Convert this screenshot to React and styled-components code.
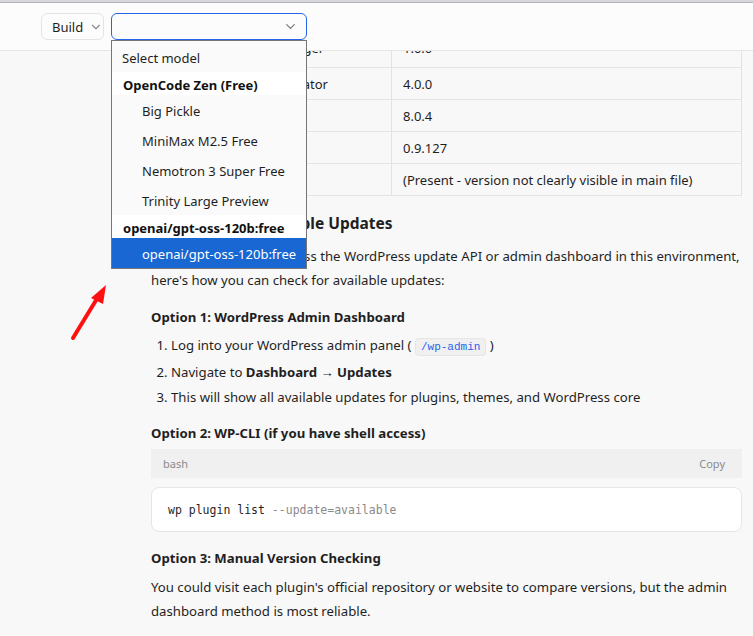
import React from "react";
import styled, { createGlobalStyle } from "styled-components";
import { ChevronDown } from "lucide-react";

const GlobalStyle = createGlobalStyle`
  html, body {
    margin: 0;
    padding: 0;
    height: 100%;
    overflow: hidden;
    background: #f8f8f8;
  }
  body {
    font-family: "Noto Sans", "Open Sans", sans-serif;
    color: #1f1f1f;
  }
`;

const models = [
  {
    group: "OpenCode Zen (Free)",
    items: ["Big Pickle", "MiniMax M2.5 Free", "Nemotron 3 Super Free", "Trinity Large Preview"],
  },
  {
    group: "openai/gpt-oss-120b:free",
    items: ["openai/gpt-oss-120b:free"],
  },
];

const selectedModel = "openai/gpt-oss-120b:free";

const versions = [
  ["WP Custom Field Manager", "1.0.0"],
  ["Schema Markup Generator", "4.0.0"],
  ["Contact Form Builder", "8.0.4"],
  ["Site Health Monitor", "0.9.127"],
  ["Analytics Helper", "(Present - version not clearly visible in main file)"],
];

function App() {
  return (
    <>
      <GlobalStyle />
      <Page>
        <TopStrip />
        <Header>
          <ModeButton>
            Build
            <ChevronDown size={14} color="#8a8a8a" strokeWidth={2} />
          </ModeButton>
          <SelectWrap>
            <SelectBox>
              <span />
              <ChevronDown size={15} color="#7a7a7a" strokeWidth={2} />
            </SelectBox>
            <Listbox>
              <Placeholder>Select model</Placeholder>
              {models.map((m) => (
                <React.Fragment key={m.group}>
                  <GroupLabel>{m.group}</GroupLabel>
                  {m.items.map((item) => (
                    <Option key={item} selected={item === selectedModel}>
                      {item}
                    </Option>
                  ))}
                </React.Fragment>
              ))}
            </Listbox>
          </SelectWrap>
        </Header>

        <Main>
          <Scrolled>
            <Table>
              <tbody>
                {versions.map(([name, ver]) => (
                  <tr key={name}>
                    <Cell>{name}</Cell>
                    <Cell>{ver}</Cell>
                  </tr>
                ))}
              </tbody>
            </Table>

            <H3>Checking for Available Updates</H3>
            <Para top={11}>
              Since I can't directly access the WordPress update API or admin dashboard in this environment,
              here's how you can check for available updates:
            </Para>

            <H4 top={14}>Option 1: WordPress Admin Dashboard</H4>
            <List>
              <li>
                Log into your WordPress admin panel ( <InlineCode>/wp-admin</InlineCode> )
              </li>
              <li>
                Navigate to <strong>Dashboard → Updates</strong>
              </li>
              <li>This will show all available updates for plugins, themes, and WordPress core</li>
            </List>

            <H4 top={12}>Option 2: WP-CLI (if you have shell access)</H4>
            <CodeHeader>
              <span>bash</span>
              <span>Copy</span>
            </CodeHeader>
            <CodeBody>
              <code>
                wp plugin list <Flag>--update=available</Flag>
              </code>
            </CodeBody>

            <H4 top={15}>Option 3: Manual Version Checking</H4>
            <Para top={7}>
              You could visit each plugin's official repository or website to compare versions, but the admin
              dashboard method is most reliable.
            </Para>
          </Scrolled>
        </Main>

        <Arrow width="60" height="80" viewBox="0 0 60 80">
          <line x1="13" y1="68" x2="38" y2="27" stroke="#ff1010" strokeWidth="4" strokeLinecap="round" />
          <polygon points="46,15 31,28 43,34" fill="#ff1010" />
        </Arrow>
      </Page>
    </>
  );
}

const Page = styled.div`
  position: relative;
  width: 753px;
  height: 636px;
  display: flex;
  flex-direction: column;
  overflow: hidden;
`;

const TopStrip = styled.div`
  height: 2px;
  background: #d8d8dc;
  border-bottom: 1px solid #b4b4b8;
`;

const Header = styled.header`
  position: relative;
  z-index: 2;
  height: 47px;
  display: flex;
  align-items: center;
  gap: 7px;
  padding-left: 41px;
  background: #fcfcfc;
  border-bottom: 1px solid #e6e6e6;
`;

const ModeButton = styled.button`
  height: 27px;
  width: 63px;
  box-sizing: border-box;
  display: flex;
  align-items: center;
  gap: 6px;
  padding: 0 0 0 10px;
  font: inherit;
  font-size: 13px;
  color: #1f1f1f;
  background: #fcfcfc;
  border: 1px solid #e4e4e4;
  border-radius: 6px;
`;

const SelectWrap = styled.div`
  position: relative;
`;

const SelectBox = styled.div`
  width: 196px;
  height: 27px;
  box-sizing: border-box;
  display: flex;
  align-items: center;
  justify-content: space-between;
  padding: 0 8px 0 10px;
  background: #fcfcfc;
  border: 1px solid #2563eb;
  border-radius: 6px;
`;

const Listbox = styled.div`
  position: absolute;
  top: 27px;
  left: 0;
  width: 196px;
  box-sizing: border-box;
  background: #fafafa;
  border: 1px solid #767676;
  font-size: 13px;
`;

const Placeholder = styled.div`
  height: 31px;
  line-height: 34px;
  padding-left: 10px;
  color: #1f1f1f;
`;

const GroupLabel = styled.div`
  height: 23px;
  line-height: 27px;
  padding-left: 11px;
  font-weight: 700;
  background: #ffffff;
  color: #111;
`;

const Option = styled.div`
  height: 30px;
  line-height: 32px;
  padding-left: 30px;
  background: ${(p) => (p.selected ? "#1967d2" : "transparent")};
  color: ${(p) => (p.selected ? "#ffffff" : "#1f1f1f")};
`;

const Main = styled.main`
  flex: 1;
  overflow: hidden;
`;

const Scrolled = styled.div`
  margin: -20px 11px 0 151px;
`;

const Table = styled.table`
  width: 100%;
  border-collapse: collapse;
  font-size: 13px;
  tr:first-child td {
    height: 36px;
    vertical-align: top;
    padding-top: 7px;
  }
`;

const Cell = styled.td`
  height: 32px;
  box-sizing: border-box;
  padding: 0 11px;
  border: 1px solid #e3e3e3;
  color: #1f1f1f;
  &:first-child {
    width: 240px;
  }
`;

const H3 = styled.h3`
  margin: 16px 0 0;
  font-size: 15.5px;
  line-height: 22px;
  font-weight: 700;
`;

const H4 = styled.h4`
  margin: ${(p) => p.top}px 0 0;
  font-size: 13.2px;
  line-height: 22px;
  font-weight: 700;
`;

const Para = styled.p`
  margin: ${(p) => p.top ?? 9}px 0 0;
  font-size: 13.2px;
  line-height: 23.5px;
`;

const List = styled.ol`
  margin: 5px 0 0;
  padding-left: 20px;
  font-size: 13.2px;
  li {
    line-height: 25px;
  }
  strong {
    font-weight: 700;
  }
`;

const InlineCode = styled.code`
  font-family: "Liberation Mono", "DejaVu Sans Mono", monospace;
  font-size: 11px;
  color: #2563eb;
  background: #f0f0f0;
  border: 1px solid #e6e6e6;
  border-radius: 4px;
  padding: 2px 5px;
`;

const CodeHeader = styled.div`
  margin-top: 5px;
  height: 29px;
  display: flex;
  align-items: center;
  justify-content: space-between;
  padding: 0 17px 0 12px;
  background: #f0f0f0;
  font-size: 11px;
  color: #8a8a8a;
`;

const CodeBody = styled.pre`
  margin: 9px 0 0;
  height: 45px;
  box-sizing: border-box;
  display: flex;
  align-items: center;
  padding: 0 16px;
  background: #ffffff;
  border: 1px solid #e6e6e6;
  border-radius: 8px;
  font-family: "Liberation Mono", "DejaVu Sans Mono", monospace;
  font-size: 11.5px;
  color: #1f1f1f;
`;

const Flag = styled.span`
  color: #8a8a8a;
`;

const Arrow = styled.svg`
  position: absolute;
  left: 60px;
  top: 270px;
`;

export default App;
